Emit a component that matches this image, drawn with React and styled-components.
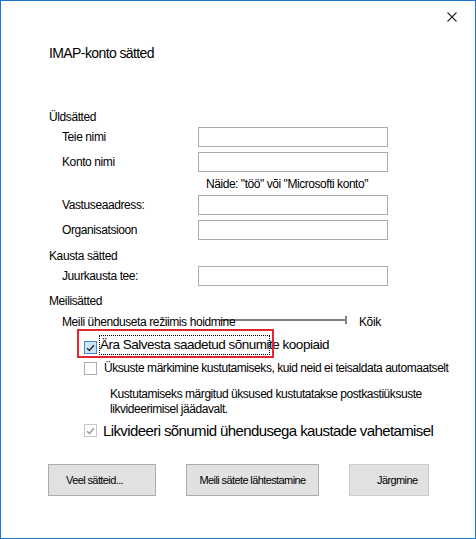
import React from "react";
import styled, { createGlobalStyle } from "styled-components";

const GlobalStyle = createGlobalStyle`
  html, body { margin: 0; padding: 0; background: #fff; }
  body { font-family: "Liberation Sans", Arial, sans-serif; color: #000; }
  *, *::before, *::after { box-sizing: border-box; }
`;

const Dialog = styled.div`
  position: relative;
  width: 476px;
  height: 539px;
  border: 1px solid #1c76cc;
  background: #fff;
  display: flex;
  flex-direction: column;
`;

const TitleBar = styled.div`
  height: 31px;
  display: flex;
  justify-content: flex-end;
  align-items: center;
  padding-right: 18px;
`;

const CloseButton = styled.button`
  width: 10px;
  height: 10px;
  padding: 0;
  border: 0;
  background: none;
  display: flex;
  cursor: default;
`;

const Body = styled.div`
  display: flex;
  flex-direction: column;
  padding-left: 48px;
`;

const Title = styled.h1`
  margin: 11px 0 0;
  height: 20px;
  line-height: 20px;
  font-size: 14px;
  font-weight: normal;
  letter-spacing: -0.6px;
`;

const SectionHeading = styled.div`
  margin-top: ${(p) => p.$mt}px;
  height: 16px;
  line-height: 16px;
  font-size: 12px;
  letter-spacing: -0.4px;
`;

const FieldRow = styled.div`
  margin-top: ${(p) => p.$mt}px;
  height: 20px;
  display: flex;
  align-items: center;
  padding-left: 13px;
`;

const FieldLabel = styled.label`
  width: 136px;
  flex: none;
  font-size: 12px;
  letter-spacing: -0.4px;
`;

const TextBox = styled.input`
  width: 190px;
  height: 20px;
  margin: 0;
  border: 1px solid #acacac;
  background: #fff;
  outline: none;
  font: inherit;
  font-size: 12px;
`;

const Hint = styled.div`
  margin-top: 4px;
  height: 16px;
  line-height: 16px;
  padding-left: 157px;
  font-size: 12px;
  letter-spacing: -0.45px;
`;

const SliderRow = styled.div`
  margin-top: 5px;
  height: 16px;
  display: flex;
  align-items: flex-start;
  padding-left: 13px;
`;

const SliderLabel = styled.span`
  position: relative;
  z-index: 1;
  width: 158px;
  flex: none;
  white-space: nowrap;
  line-height: 16px;
  font-size: 12px;
  letter-spacing: -0.4px;
`;

const SliderTrack = styled.div`
  width: 127px;
  height: 8px;
  margin-top: 2px;
  display: flex;
  align-items: center;
`;

const SliderLine = styled.div`
  flex: 1;
  height: 2px;
  background: #808080;
`;

const SliderTick = styled.div`
  width: 2px;
  height: 8px;
  background: #808080;
`;

const SliderValue = styled.span`
  margin-left: 12px;
  line-height: 16px;
  font-size: 12px;
  letter-spacing: -0.4px;
`;

const CheckRow = styled.div`
  margin-top: ${(p) => p.$mt}px;
  height: ${(p) => p.$h}px;
  display: flex;
  align-items: flex-start;
  padding-left: 35px;
`;

const Box = styled.span`
  width: 13px;
  height: 13px;
  flex: none;
  margin-top: ${(p) => p.$offset}px;
  display: flex;
  align-items: center;
  justify-content: center;
  border: 1px solid ${(p) => (p.$variant === "focus" ? "#4f86bd" : p.$variant === "disabled" ? "#c6c6c6" : "#adadad")};
  background: ${(p) => (p.$variant === "focus" ? "#cce4f7" : "#fff")};
`;

const FocusLabel = styled.span`
  width: 171px;
  height: 20px;
  margin-left: 2px;
  border: 1px dotted #000;
  padding-top: 1px;
  white-space: nowrap;
  line-height: 16px;
  font-size: 13.5px;
  letter-spacing: -0.5px;
`;

const CheckText = styled.span`
  margin-left: ${(p) => p.$ml}px;
  white-space: nowrap;
  line-height: ${(p) => p.$lh}px;
  font-size: ${(p) => p.$size}px;
  letter-spacing: ${(p) => p.$ls}px;
`;

const Note = styled.p`
  margin: 11px 0 0;
  padding-left: 61px;
  line-height: 15px;
  font-size: 12px;
  letter-spacing: -0.45px;
`;

const ButtonRow = styled.div`
  margin: 24px 0 0 -1px;
  display: flex;
  gap: 30px;
`;

const Button = styled.button`
  width: ${(p) => p.$w}px;
  height: 32px;
  margin: 0;
  padding: 0 ${(p) => p.$pr || 0}px 0 ${(p) => p.$pl || 0}px;
  border: 1px solid ${(p) => (p.$muted ? "#cccccc" : "#adadad")};
  background: #e1e1e1;
  color: #000;
  font-family: "Liberation Sans", Arial, sans-serif;
  font-size: 11px;
  letter-spacing: -0.6px;
  text-align: ${(p) => (p.$pl ? "left" : "center")};
  cursor: default;
`;

const Annotation = styled.div`
  position: absolute;
  left: 76px;
  top: 328px;
  width: 197px;
  height: 29px;
  border: 2px solid #e3262f;
  pointer-events: none;
`;

const Check = ({ color }) => (
  <svg width="9" height="8" viewBox="0 0 9 8">
    <path d="M1 4.2 L3.4 6.5 L8 1.2" fill="none" stroke={color} strokeWidth="1.4" />
  </svg>
);

export default function App() {
  return (
    <>
      <GlobalStyle />
      <Dialog>
        <TitleBar>
          <CloseButton aria-label="Sulge">
            <svg width="10" height="10" viewBox="0 0 10 10">
              <path d="M0.5 0.5 L9.5 9.5 M9.5 0.5 L0.5 9.5" stroke="#2b2b2b" strokeWidth="1.1" fill="none" />
            </svg>
          </CloseButton>
        </TitleBar>
        <Body>
          <Title>IMAP-konto sätted</Title>

          <SectionHeading $mt={46}>Üldsätted</SectionHeading>
          <FieldRow $mt={2}>
            <FieldLabel>Teie nimi</FieldLabel>
            <TextBox />
          </FieldRow>
          <FieldRow $mt={5}>
            <FieldLabel>Konto nimi</FieldLabel>
            <TextBox />
          </FieldRow>
          <Hint>Näide: "töö" või "Microsofti konto"</Hint>
          <FieldRow $mt={3}>
            <FieldLabel>Vastuseaadress:</FieldLabel>
            <TextBox />
          </FieldRow>
          <FieldRow $mt={5}>
            <FieldLabel>Organisatsioon</FieldLabel>
            <TextBox />
          </FieldRow>

          <SectionHeading $mt={8}>Kausta sätted</SectionHeading>
          <FieldRow $mt={2}>
            <FieldLabel>Juurkausta tee:</FieldLabel>
            <TextBox />
          </FieldRow>

          <SectionHeading $mt={7}>Meilisätted</SectionHeading>
          <SliderRow>
            <SliderLabel>Meili ühenduseta režiimis hoidmine</SliderLabel>
            <SliderTrack>
              <SliderLine />
              <SliderTick />
            </SliderTrack>
            <SliderValue>Kõik</SliderValue>
          </SliderRow>

          <CheckRow $mt={5} $h={20}>
            <Box $variant="focus" $offset={6}>
              <Check color="#2a2a2a" />
            </Box>
            <FocusLabel>Ära Salvesta saadetud sõnumite koopiaid</FocusLabel>
          </CheckRow>
          <CheckRow $mt={5} $h={16}>
            <Box $offset={2} />
            <CheckText $ml={7} $lh={16} $size={12} $ls={-0.45}>
              Üksuste märkimine kustutamiseks, kuid neid ei teisaldata automaatselt
            </CheckText>
          </CheckRow>
          <Note>
            Kustutamiseks märgitud üksused kustutatakse postkastiüksuste
            <br />
            likvideerimisel jäädavalt.
          </Note>
          <CheckRow $mt={5} $h={18}>
            <Box $variant="disabled" $offset={2}>
              <Check color="#9a9a9a" />
            </Box>
            <CheckText $ml={6} $lh={18} $size={15} $ls={-0.6}>
              Likvideeri sõnumid ühendusega kaustade vahetamisel
            </CheckText>
          </CheckRow>

          <ButtonRow>
            <Button $w={108} $pl={17}>Veel sätteid...</Button>
            <Button $w={133}>Meili sätete lähtestamine</Button>
            <Button $w={80} $muted $pl={27}>Järgmine</Button>
          </ButtonRow>
        </Body>
        <Annotation />
      </Dialog>
    </>
  );
}
